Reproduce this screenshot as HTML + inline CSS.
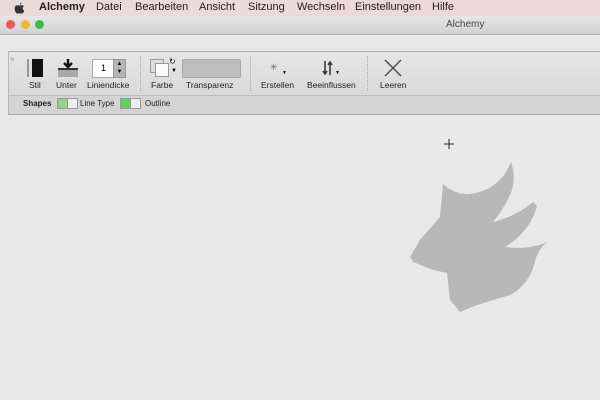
<!DOCTYPE html>
<html><head><style>
body{margin:0;width:600px;height:400px;overflow:hidden;background:#e9e9e9;font-family:"Liberation Sans",sans-serif;position:relative}
.a{position:absolute}
#menu{left:0;top:0;width:600px;height:16px;background:linear-gradient(90deg,#e9dcd8,#eed7d9);font-size:11px;color:#222}
#menu span{position:absolute;top:1px}
#title{left:0;top:16px;width:600px;height:18px;background:linear-gradient(#e7e7e7,#d2d2d2);border-bottom:1px solid #b0b0b0;font-size:10px;color:#444}
.dot{width:9px;height:9px;border-radius:50%;top:4px}
#tb{left:8px;top:51px;width:592px;height:43px;background:linear-gradient(#e6e6e6,#d9d9d9);border-top:1px solid #a9a9a9;border-left:1px solid #b8b8b8}
#sb{left:8px;top:95px;width:592px;height:18px;background:#d4d4d4;border-bottom:1px solid #a8a8a8;border-left:1px solid #b8b8b8;border-top:1px solid #bdbdbd}
.lb{font-size:8.5px;color:#222;top:80px}
.sep{width:0;border-left:1px dotted #aaa;top:56px;height:35px}
</style></head><body>
<div id="menu" class="a">
<svg class="a" style="left:14px;top:2px" width="11" height="12" viewBox="0 0 11 12"><path d="M7.5 0.5Q7.6 2.2 5.8 2.8Q5.7 1.2 7.5 0.5ZM5.5 3.6Q6.6 3 8 3.1Q9.3 3.3 9.9 4.3Q8.5 5.1 8.7 6.7Q8.9 8 10.3 8.6Q9.8 10.2 8.8 11.2Q8 12 7 11.5Q5.6 11 4.2 11.5Q3.2 12 2.4 11Q0.5 8.8 0.6 6.2Q0.8 3.5 3.2 3.2Q4.3 3.2 5.5 3.6Z" fill="#333"/></svg>
<span style="left:39px;font-weight:bold">Alchemy</span>
<span style="left:96px">Datei</span>
<span style="left:135px">Bearbeiten</span>
<span style="left:199px">Ansicht</span>
<span style="left:248px">Sitzung</span>
<span style="left:297px">Wechseln</span>
<span style="left:355px">Einstellungen</span>
<span style="left:432px">Hilfe</span>
</div>
<div id="title" class="a"><span class="a" style="left:446px;top:3px">Alchemy</span>
<div class="a dot" style="left:6px;background:#ee5a55"></div>
<div class="a dot" style="left:21px;background:#f2b536"></div>
<div class="a dot" style="left:35px;background:#3cb84a"></div></div>
<div id="tb" class="a"></div>
<div id="sb" class="a"></div>
<div class="a" style="left:10px;top:55px;font-size:8px;color:#888">×</div>
<div class="a" style="left:27px;top:59px;width:2px;height:18px;background:#999"></div>
<div class="a" style="left:32px;top:59px;width:11px;height:18px;background:#111"></div>
<div class="a lb" style="left:29px">Stil</div>
<svg class="a" style="left:58px;top:58px" width="20" height="20"><path d="M10 1v7M6 5l4 4 4-4" stroke="#111" stroke-width="2.5" fill="none"/><rect x="0" y="10" width="20" height="2" fill="#333"/><rect x="0" y="12" width="20" height="7" fill="#a8a8a8"/></svg>
<div class="a lb" style="left:56px">Unter</div>
<div class="a" style="left:92px;top:59px;width:21px;height:17px;background:#fff;border:1px solid #aaa;font-size:9px;text-align:center;line-height:17px">1</div>
<div class="a" style="left:113px;top:59px;width:11px;height:17px;background:#b5b5b5;border:1px solid #999;font-size:6px;line-height:8px;text-align:center">▲<br>▼</div>
<div class="a lb" style="left:87px">Liniendicke</div>
<div class="a sep" style="left:140px"></div>
<div class="a" style="left:150px;top:59px;width:12px;height:12px;background:#ddd;border:1px solid #999"></div>
<div class="a" style="left:155px;top:63px;width:12px;height:12px;background:#fafafa;border:1px solid #999"></div>
<div class="a" style="left:169px;top:57px;font-size:8px">↻</div>
<div class="a" style="left:171px;top:68px;font-size:6px">▼</div>
<div class="a lb" style="left:151px">Farbe</div>
<div class="a" style="left:182px;top:59px;width:57px;height:17px;background:#bdbdbd;border:1px solid #a9a9a9;border-radius:2px"></div>
<div class="a lb" style="left:186px">Transparenz</div>
<div class="a sep" style="left:250px"></div>
<div class="a" style="left:270px;top:62px;font-size:9px;color:#666">✳</div>
<div class="a" style="left:282px;top:70px;font-size:5px">▼</div>
<div class="a lb" style="left:261px">Erstellen</div>
<svg class="a" style="left:322px;top:60px" width="12" height="16"><path d="M3 1v13M1 11l2 3 2-3M8 15V2M6 5l2-3 2 3" stroke="#333" stroke-width="1.5" fill="none"/></svg>
<div class="a" style="left:335px;top:70px;font-size:5px">▼</div>
<div class="a lb" style="left:307px">Beeinflussen</div>
<div class="a sep" style="left:367px"></div>
<svg class="a" style="left:384px;top:59px" width="18" height="18"><path d="M1 1L17 17M17 1L1 17" stroke="#444" stroke-width="1.3"/></svg>
<div class="a lb" style="left:380px">Leeren</div>
<div class="a" style="left:23px;top:99px;font-size:8px;font-weight:bold;color:#222">Shapes</div>
<div class="a" style="left:57px;top:98px;width:9px;height:9px;background:#9ccf8c;border:1px solid #999"></div>
<div class="a" style="left:67px;top:98px;width:9px;height:9px;background:#eee;border:1px solid #999"></div>
<div class="a" style="left:80px;top:99px;font-size:8px;color:#222">Line Type</div>
<div class="a" style="left:120px;top:98px;width:9px;height:9px;background:#5fcf5f;border:1px solid #999"></div>
<div class="a" style="left:130px;top:98px;width:9px;height:9px;background:#eee;border:1px solid #999"></div>
<div class="a" style="left:145px;top:99px;font-size:8px;color:#222">Outline</div>
<svg class="a" style="left:0;top:0" width="600" height="400">
<path d="M444 144h10M449 139v10" stroke="#222" stroke-width="1"/>
<path d="M511 162 Q517 180 510 195 Q503 210 493 222 Q517 216 533 202 L537 206 Q530 232 505 247 Q530 250 547 242 Q538 250 536 258 Q530 285 510 295 L477 305 L460 312 L450 300 L447 273 L433 270 L413 262 L410 257 L420 240 L440 217 L442 195 L443 184 Q455 195 470 194 Q500 190 511 162 Z" fill="#b8b8b8"/>
</svg>
</body></html>
